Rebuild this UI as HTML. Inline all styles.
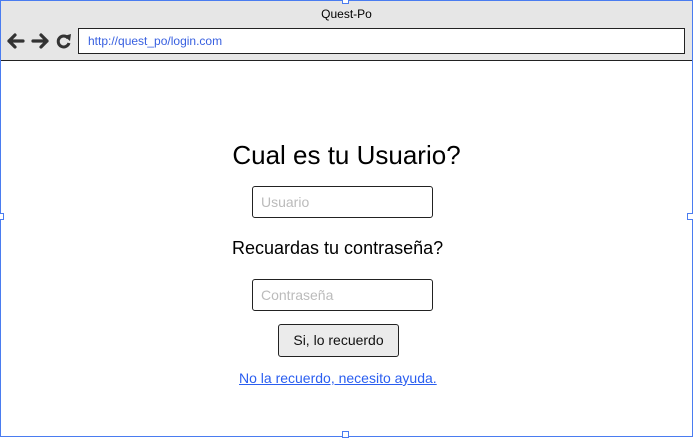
<!DOCTYPE html>
<html><head><meta charset="utf-8"><style>
body{margin:0;width:693px;height:437px;position:relative;background:#fff;font-family:"Liberation Sans",Arial,sans-serif;overflow:hidden}
.frame{position:absolute;left:0;top:0;width:691px;height:435px;border:1px solid #4a7cf0}
.bar{position:absolute;left:1px;top:1px;width:691px;height:59px;background:#e6e6e6;border-bottom:1px solid #222}
.title{position:absolute;left:0;width:693px;top:7px;text-align:center;font-size:12px;color:#000}
.addr{position:absolute;left:78px;top:28px;width:596px;height:24px;border:1px solid #222;background:#fff;font-size:12px;color:#3860e0;line-height:24px;padding-left:9px;box-sizing:content-box}
.h{position:absolute;width:5px;height:5px;border:1px solid #4a7cf0;background:#fff}
.abs{position:absolute}
.inp{position:absolute;left:252px;width:181px;height:32px;border:1px solid #222;border-radius:3px;font-size:14px;color:#bbb;line-height:31px;padding-left:8px;box-sizing:border-box}
</style></head><body>
<div class="frame"></div>
<div class="bar"></div>
<div class="title">Quest-Po</div>
<svg class="abs" style="left:6px;top:31px" width="68" height="20" viewBox="0 0 68 20">
<path d="M3 10H17M9 4L3 10L9 16" stroke="#333" stroke-width="3.2" fill="none" stroke-linecap="round" stroke-linejoin="round"/>
<path d="M41 10H27M35 4L41 10L35 16" stroke="#333" stroke-width="3.2" fill="none" stroke-linecap="round" stroke-linejoin="round"/>
<path d="M62 7A5.5 5.5 0 1 0 63 12" stroke="#333" stroke-width="3" fill="none"/>
<path d="M58 5L65 3L64 10Z" fill="#333"/>
</svg>
<div class="addr">http://quest_po/login.com</div>
<div class="h" style="left:342px;top:-3px"></div>
<div class="h" style="left:342px;top:431px"></div>
<div class="h" style="left:-3px;top:213px"></div>
<div class="h" style="left:687px;top:213px"></div>
<div class="abs" style="left:0;width:693px;top:140px;text-align:center;font-size:26px;color:#000">Cual es tu Usuario?</div>
<div class="inp" style="top:186px">Usuario</div>
<div class="abs" style="left:232px;top:238px;font-size:18px;color:#000">Recuardas tu contraseña?</div>
<div class="inp" style="top:279px">Contraseña</div>
<div class="abs" style="left:278px;top:324px;width:121px;height:33px;border:1px solid #222;border-radius:3px;background:#ebebeb;box-sizing:border-box;text-align:center;line-height:31px;font-size:14px;color:#111">Si, lo recuerdo</div>
<div class="abs" style="left:239px;top:370px;font-size:14px;color:#2a5ef0;text-decoration:underline">No la recuerdo, necesito ayuda.</div>
</body></html>
